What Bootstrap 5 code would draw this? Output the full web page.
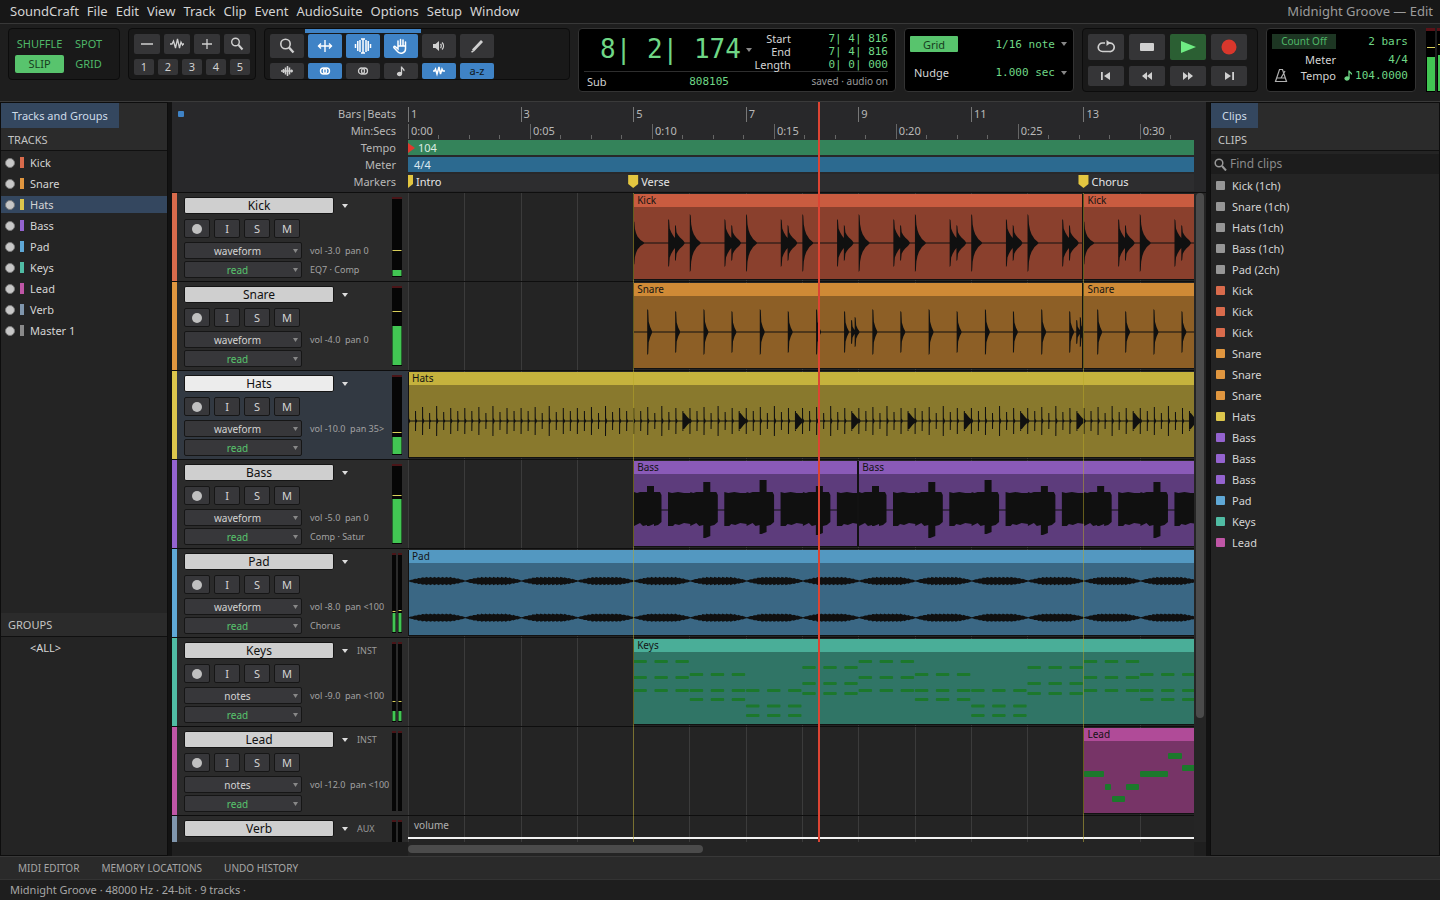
<!DOCTYPE html>
<html lang="en" data-bs-theme="dark">
<head>
<meta charset="utf-8">
<meta name="viewport" content="width=device-width, initial-scale=1">
<title>SoundCraft</title>
<link href="https://cdn.jsdelivr.net/npm/bootstrap@5.3.0/dist/css/bootstrap.min.css" rel="stylesheet">
<style>
:root{--ui:"Noto Sans","Open Sans",sans-serif;--mono:"DejaVu Sans Mono",monospace;--green:#6fd786;--blue:#3f83c6}
body{font:12px/16px var(--ui);background:#1c1c1c;color:#d4d4d4}
button,select,input{font:inherit;color:inherit;border:0;padding:0;margin:0;background:none}
svg{display:block}
a{color:inherit;text-decoration:none}
.menubar{flex:none;height:24px;background:#171717;border-bottom:1px solid #383838;padding:0 7px 1px 10px;gap:8px;font-size:13px}
.menubar span{color:#9b9b9b}
.toolbar{flex:none;height:78px;background:#1e1e1e;border-bottom:1px solid #3a3a3a;padding:4px 0 0 8px;gap:8px;overflow:hidden}
.tool-group{background:#191919;border:1px solid #0c0c0c;border-radius:4px;height:52px;flex:none;overflow:hidden}
.tool-tall{height:64px}
.lcd{background:#000;border:1px solid #333;color:var(--green);height:64px;border-radius:4px;flex:none;font-size:11px;line-height:13px}
.lcd label,.lcd .cap{color:#d4d4d4}
.num{font-family:var(--mono);white-space:pre}
.mode-grid{width:112px;padding:6px;display:grid;grid-template-columns:49px 49px;row-gap:2px;color:#4fb868;font-size:11px}
.mode-grid button{height:18px;line-height:18px}
.mode-grid .on{background:#58c46d;color:#173d1e;border-radius:2px}
.key{background:#353537;border-radius:2px;color:#d0d0d0;display:flex;align-items:center;justify-content:center;flex:none}
.key.on{background:var(--blue);color:#fff}
.zoom-group{width:128px;padding:5px}
.zoom-a .key{height:20px;width:26px}
.zoom-b{margin-top:5px}
.zoom-b .key{height:16px;width:20px;font-size:11px}
.tool-set{width:306px}
.tool-set .key{width:34px;height:24px}
.tool-set .high{padding:1px 5px 0}
.tool-set .low{padding:0 5px;margin-top:5px}
.tool-set .low .key{height:16px;font-size:11px}
.tool-set .az{color:#101820}
.smart{height:4px;width:116px;background:var(--blue);margin-left:40px}
.transport{width:176px;padding:5px}
.transport>div{gap:5px}
.transport .key{width:36px;height:26px}
.transport .low{margin-top:6px}
.transport .low .key{height:20px}
.transport .play{background:#2b5f33}
.tag{background:#58c46d;color:#173d1e;text-align:center;border-radius:1px;width:48px;height:16px}
.count{width:64px;height:15px;background:#1d3623;color:#4fb868;font-size:10px}
.big{font:26px/34px var(--mono);white-space:pre}
.bounds{width:40px;margin-left:-6px}
.sub-line{border-top:1px solid #2e2e2e;padding:3px 0 0 3px}
.saved{color:#9b9b9b;font-size:10px}
.pick{appearance:none;color:var(--green);font-family:var(--mono);text-align:right;padding-right:12px;background:url("data:image/svg+xml,%3Csvg xmlns='http://www.w3.org/2000/svg' width='6' height='4'%3E%3Cpath d='M0 0h6L3 4z' fill='%23888'/%3E%3C/svg%3E") right center no-repeat}
.panel-side{background:#242424;border:1px solid #0d0d0d;overflow:hidden}
.side-left{flex:0 0 168px;width:168px}
.side-right{flex:0 0 230px;width:230px}
.panel-head{background:#2b2b2b}
.panel-head h2,.group-head{font-size:11px;line-height:16px;margin:0;font-weight:400;color:#c4c4c4;border-bottom:1px solid #101010}
.panel-head h2{height:23px;padding:4px 7px}
.group-head{background:#2b2b2b;height:24px;padding:4px 7px}
.group-body{height:218px;padding:3px 29px;font-size:11px}
.tabbtn{background:#34475f;color:#cfdbe8;height:25px;padding:0 11px;font-size:11px}
.list-line{height:21px;padding:0 4px;font-size:11px;display:flex;align-items:center;width:100%;text-align:left}
.list-line i{flex:none}
.track-list{padding-top:1px}
.list-line .led{width:10px;height:10px;border-radius:50%;background:#c8c8c8;border:1px solid #7b7b7b}
.list-line .stripe{width:4px;height:11px;margin:0 6px 0 5px}
.track-list .sel{background:linear-gradient(#34475f,#34475f) 0 2px/100% 17px no-repeat}
.clip-list{padding-top:1px}
.clip-list .list-line{padding:0 5px}
.clip-list .chip{width:9px;height:9px;border-radius:1px;margin-right:7px}
.find{background:#1c1c1c;height:20px;margin-top:3px;padding:0 3px}
.find input{flex:1;min-width:0;margin-left:3px;outline:0}
.find input::placeholder{color:#8a8a8a;opacity:1}
.split{flex:0 0 4px;background:#121212}
.edit-pane{min-width:0;background:#242424}
.ruler-row{flex:none;height:91px;background:#28282a;border-bottom:1px solid #0e0e0e;padding-top:4px}
.ruler-names{flex:0 0 236px;width:236px;margin-top:-1px;padding-right:12px;font-size:11px;line-height:17px;text-align:right;color:#b8b8b8}
.ruler-names i{width:6px;height:6px;border-radius:1px;background:#3f83c6;margin:6px 0 0 6px}
.ruler-lane{flex:1;min-width:0;overflow:hidden}
.ruler-lane div{height:17px;overflow:hidden}
svg text{font-family:var(--ui);font-size:11px}
.gutter{flex:0 0 12px;background:#252525}
.thumb-v{width:8px;height:525px;max-height:100%;background:#4b4b4b;border-radius:4px;margin:0 0 0 2px}
.thumb-h{width:295px;height:8px;background:#4b4b4b;border-radius:4px;margin-top:3px}
.hscroll{flex:none;height:14px}
.hscroll .pad,.hscroll .gutter{background:#1f1f1f}
.hscroll .pad{flex:0 0 236px}
.track-row{height:89px;border-bottom:1px solid #0e0e0e;flex:none}
.strip{flex:0 0 236px;width:236px;background:#2b2b2b;border-left:5px solid var(--c)}
.strip.sel{background:#323942}
.strip-main{flex:1;min-width:0;padding:4px 0 0 7px;white-space:nowrap}
.track-name{width:150px;height:17px;background:#cfcfcf;color:#111;border-radius:2px;border:1px solid #151515;line-height:14px}
.sel .track-name{background:#ececec}
.name-line svg{margin:0 9px 0 8px}
.auto-line{margin-top:2px}
.kind{font-size:9px;color:#9a9a9a}
.sq{width:26px;height:19px;background:#37373a;border:1px solid #161616;border-radius:2px;font-size:11px;line-height:17px}
.sq .led2{display:block;width:10px;height:10px;border-radius:50%;background:#c0c0c0;margin:auto}
.sq-line{margin-top:5px}
.view{appearance:none;width:118px;height:17px;border:1px solid #161616;border-radius:2px;background:#37373a url("data:image/svg+xml,%3Csvg xmlns='http://www.w3.org/2000/svg' width='5' height='4'%3E%3Cpath d='M0 0h5L2.500 4z' fill='%23888'/%3E%3C/svg%3E") right 3px center no-repeat;text-align:center;text-align-last:center;padding-right:11px;font-size:10px;line-height:14px}
.view.auto{color:#58c46d}
.info{font-size:9px;color:#a2a2a2;white-space:pre}
.meter{margin:4px 6px 0 0;flex:none}
.lane{flex:1;min-width:0;position:relative;overflow:hidden;background:#242424}
.clip{position:absolute;top:1px;height:86px;background:var(--b);overflow:hidden;border:solid #121212;border-width:0 1px 1px}
.clip b{display:block;font-weight:400;font-size:10px;line-height:13px;height:13px;padding-left:3px;background:var(--h);color:#141414}
.overlay-lines{position:absolute;top:0;left:236px;right:12px;bottom:14px;overflow:hidden;pointer-events:none}
.tabs-low{flex:none;height:23px;background:#2a2a2a;border-top:1px solid #383838;padding:0 18px;gap:22px;font-size:10px;color:#a6a6a6}
.status{flex:none;height:21px;background:#1e1e1e;border-top:1px solid #333;padding:0 10px;font-size:11px;line-height:20px;color:#a6a6a6}
</style>
</head>
<body class="d-flex flex-column vh-100 overflow-hidden">
<nav class="menubar d-flex align-items-center" aria-label="Main menu">
<a href="#">SoundCraft</a><a href="#">File</a><a href="#">Edit</a><a href="#">View</a><a href="#">Track</a><a href="#">Clip</a><a href="#">Event</a><a href="#">AudioSuite</a><a href="#">Options</a><a href="#">Setup</a><a href="#">Window</a>
<span class="ms-auto">Midnight Groove — Edit</span>
</nav>

<header class="toolbar d-flex">
<div class="tool-group mode-grid"><button>SHUFFLE</button><button>SPOT</button><button class="on">SLIP</button><button>GRID</button></div>

<div class="tool-group zoom-group">
<div class="zoom-a d-flex justify-content-between">
<button class="key" aria-label="Zoom out"><svg width="14" height="14" stroke="currentColor" stroke-width="1.3"><path d="M1 7h12"/></svg></button>
<button class="key" aria-label="Waveform zoom"><svg width="16" height="14" fill="none" stroke="currentColor" stroke-width="1.3"><path d="M1 7h2l1.500-3 2 7 2-9 2 9 1.500-6 1.500 3 .8-1H15"/></svg></button>
<button class="key" aria-label="Zoom in"><svg width="14" height="14" stroke="currentColor" stroke-width="1.3"><path d="M2 7h10M7 2v10"/></svg></button>
<button class="key" aria-label="Zoom tool"><svg width="14" height="14" fill="none" stroke="currentColor" stroke-width="1.400"><circle cx="5.500" cy="5" r="3.800"/><path d="M8.500 8l4 4.500" stroke-width="2"/></svg></button>
</div>
<div class="zoom-b d-flex justify-content-between"><button class="key">1</button><button class="key">2</button><button class="key">3</button><button class="key">4</button><button class="key">5</button></div>
</div>

<div class="tool-group tool-set">
<div class="smart"></div>
<div class="high d-flex gap-1">
<button class="key" aria-label="Zoomer"><svg width="18" height="18" fill="none" stroke="currentColor" stroke-width="1.600"><circle cx="7.500" cy="7" r="4.700"/><path d="M11 10.500l4.500 5" stroke-width="2.400"/></svg></button>
<button class="key on" aria-label="Trim"><svg width="18" height="16" fill="none" stroke="currentColor" stroke-width="1.400"><path d="M2 8h14M9 2v12M5 5.500L2.500 8 5 10.500M13 5.500L15.500 8 13 10.500"/></svg></button>
<button class="key on" aria-label="Selector"><svg width="18" height="18" fill="none" stroke="currentColor" stroke-width="1.500"><path d="M1.500 7v4M3.800 4v10M6 3v12M12 3v12M14.200 4v10M16.500 7v4M7 2h4M7 16h4M9 2v14"/></svg></button>
<button class="key on" aria-label="Grabber"><svg width="18" height="18" fill="none" stroke="currentColor" stroke-width="1.500" stroke-linecap="round"><path d="M6 9V4M8.500 9V2.500M11 9V3M13.500 10V5M6 9v3L3 9.500c-1-.5-1.500.5-1 1.200L6 15c2 2 7.500 1.500 7.500-3V9H6"/></svg></button>
<button class="key" aria-label="Scrubber"><svg width="18" height="16" fill="none" stroke="currentColor" stroke-width="1.300"><path d="M3 6h2.500L9 3v10l-3.500-3H3z" fill="currentColor" stroke="none"/><path d="M10.500 6c1 1 1 3 0 4M12 4.500c2 2 2 5 0 7"/></svg></button>
<button class="key" aria-label="Pencil"><svg width="16" height="16" stroke="currentColor" stroke-width="2.800"><path d="M4 12.500L13 3"/><path d="M2.500 14l2-1" stroke-width="1.500"/></svg></button>
</div>
<div class="low d-flex gap-1">
<button class="key" aria-label="Tab to transients"><svg width="14" height="12" fill="none" stroke="currentColor" stroke-width="1.500"><path d="M1 6h12M3.500 4v4M5.500 2.500v7M7.500 1v10M9.500 2.500v7M11.500 4.500v3"/></svg></button>
<button class="key on" aria-label="Link timeline"><svg width="14" height="10" fill="none" stroke="currentColor" stroke-width="1.400"><circle cx="5.500" cy="5" r="3"/><circle cx="8.500" cy="5" r="3"/></svg></button>
<button class="key" aria-label="Link track"><svg width="14" height="10" fill="none" stroke="currentColor" stroke-width="1.300"><circle cx="5.500" cy="5" r="3"/><circle cx="8.500" cy="5" r="3"/></svg></button>
<button class="key" aria-label="Mirrored MIDI"><svg width="10" height="12" fill="none" stroke="currentColor" stroke-width="1.300"><ellipse cx="3.500" cy="9" rx="2" ry="1.500" fill="currentColor"/><path d="M5.500 9V1.500c0 2 3 2 2.500 4.500"/></svg></button>
<button class="key on" aria-label="Automation follows"><svg width="14" height="12" fill="none" stroke="currentColor" stroke-width="1.500"><path d="M1 6h1.500l1-2 1.500 5 2-7 1.500 7 1.500-5 1 2h2"/></svg></button>
<button class="key on az">a-z</button>
</div>
</div>

<div class="lcd" style="width:318px;padding:3px 7px 0 5px">
<div class="d-flex" style="height:39px">
<span class="big ps-3">8| 2| 174</span>
<svg class="ms-1" width="12" height="36" fill="#888"><path d="M1 16h6l-3 4z"/></svg>
<div class="cap text-end bounds">Start<br>End<br>Length</div>
<div class="num text-end ms-auto">7| 4| 816
7| 4| 816
0| 0| 000</div>
</div>
<div class="d-flex justify-content-between sub-line"><span class="cap">Sub</span><span class="num">808105</span><span class="saved">saved · audio on</span></div>
</div>

<div class="lcd d-flex flex-column" style="width:170px;padding:7px 6px 0 5px">
<div class="d-flex justify-content-between align-items-center"><button class="tag">Grid</button><select class="pick" aria-label="Grid value"><option>1/16 note</option></select></div>
<div class="d-flex justify-content-between align-items-center" style="margin-top:14px"><label for="nudge" class="ps-1">Nudge</label><select class="pick" id="nudge"><option>1.000 sec</option></select></div>
</div>

<div class="tool-group tool-tall transport">
<div class="d-flex">
<button class="key" aria-label="Loop"><svg width="18" height="14" fill="none" stroke="currentColor" stroke-width="1.700"><path d="M8 3H5.500a4 4 0 000 8.500h7a4 4 0 001-8.300l-2-.2"/><path d="M9.500 0l4 3-4 3z" fill="currentColor" stroke="none"/></svg></button>
<button class="key" aria-label="Stop"><svg width="14" height="8" fill="currentColor"><rect width="14" height="8" rx="1"/></svg></button>
<button class="key play" aria-label="Play"><svg width="16" height="14" fill="#6fec83"><path d="M1 1l15 6-15 6z"/></svg></button>
<button class="key" aria-label="Record"><svg width="16" height="16" fill="#d9372c"><circle cx="8" cy="8" r="7.500"/></svg></button>
</div>
<div class="low d-flex">
<button class="key" aria-label="Return to start"><svg width="12" height="10" fill="currentColor"><path d="M1 1h1.800v8H1zM10 1v8L4 5z"/></svg></button>
<button class="key" aria-label="Rewind"><svg width="12" height="8" fill="currentColor"><path d="M6 0v8L1 4zM11 0v8L6 4z"/></svg></button>
<button class="key" aria-label="Fast forward"><svg width="12" height="8" fill="currentColor"><path d="M1 0l5 4-5 4zM6 0l5 4-5 4z"/></svg></button>
<button class="key" aria-label="Go to end"><svg width="12" height="10" fill="currentColor"><path d="M9.200 1H11v8H9.200zM2 1l6 4-6 4z"/></svg></button>
</div>
</div>

<div class="lcd" style="width:150px;padding:5px 7px 0 5px">
<div class="d-flex justify-content-between align-items-center"><button class="count">Count Off</button><span class="num">2 bars</span></div>
<div class="d-flex mt-1"><span class="cap text-end" style="width:64px">Meter</span><span class="num ms-auto">4/4</span></div>
<div class="d-flex align-items-center" style="margin-top:2px;height:14px"><svg width="14" height="15" fill="none" stroke="#b0b0b0" stroke-width="1.200" style="margin-left:2px"><path d="M5.500 1.500h3L12.500 13.500h-11zM3 10h8M7 10l4-7"/></svg><span class="cap text-end" style="width:48px">Tempo</span><svg class="ms-auto" width="11" height="12" fill="none" stroke="#6fd786" stroke-width="1.300"><ellipse cx="3" cy="9.500" rx="2" ry="1.500" fill="#6fd786"/><path d="M5 9.500V1.500c0 2 3 2 2.500 4"/></svg><span class="num">104.0000</span></div>
</div>
<svg class="flex-shrink-0" width="20" height="64" style="margin-left:2px"><path d="M0 0h9v64H0zM11 0h9v64h-9z"/><path d="M0 0h9v3H0zM11 0h9v3h-9z" fill="#5a1218"/><path d="M1 19h8v1H1zM12 16h8v1h-8z" fill="#d9cf5a"/><path d="M1 29h8v34H1zM12 27h8v36h-8z" fill="#42c653"/></svg>
</header>

<main class="d-flex flex-grow-1" style="min-height:0">
<aside class="panel-side side-left d-flex flex-column">
<div class="panel-head"><button class="tabbtn">Tracks and Groups</button><h2>TRACKS</h2></div>
<div class="track-list" id="trackList"></div>
<div class="group-head mt-auto">GROUPS</div>
<div class="group-body">&lt;ALL&gt;</div>
</aside>
<div class="split"></div>
<section class="edit-pane flex-grow-1 d-flex flex-column position-relative">
<div class="ruler-row d-flex">
<div class="ruler-names d-flex"><i></i><div class="ms-auto">Bars|Beats<br>Min:Secs<br>Tempo<br>Meter<br>Markers</div></div>
<div class="ruler-lane" id="rulers"></div><div style="flex:0 0 12px"></div>
</div>
<div class="d-flex flex-grow-1" style="min-height:0"><div class="flex-grow-1 d-flex flex-column overflow-hidden" id="rows" style="min-width:0"></div><div class="gutter"><div class="thumb-v"></div></div></div>
<div class="hscroll d-flex"><div class="pad"></div><div class="flex-grow-1"><div class="thumb-h"></div></div><div class="gutter"></div></div>
<div class="overlay-lines"><svg width="2000" height="100%" id="cursor"></svg></div>
</section>
<div class="split"></div>
<aside class="panel-side side-right">
<div class="panel-head"><button class="tabbtn">Clips</button><h2>CLIPS</h2></div>
<div class="find d-flex align-items-center"><svg width="13" height="13" fill="none" stroke="#999" stroke-width="1.500"><circle cx="5" cy="5" r="3.800"/><path d="M8 8l4 4.500" stroke-width="2"/></svg><input type="search" placeholder="Find clips" aria-label="Find clips"></div>
<div class="clip-list" id="clipList"></div>
</aside>
</main>

<nav class="tabs-low d-flex align-items-center"><a href="#">MIDI EDITOR</a><a href="#">MEMORY LOCATIONS</a><a href="#">UNDO HISTORY</a></nav>
<footer class="status">Midnight Groove · 48000 Hz · 24-bit · 9 tracks ·</footer>

<script src="https://cdn.jsdelivr.net/npm/bootstrap@5.3.0/dist/js/bootstrap.bundle.min.js"></script>
<script>
const BAR = 56.29, SEC = BAR * 104 / 240, LAST = 30;
const px = bar => (bar - 1) * BAR;
const tracks = [
 {n:'Kick', c:'#d96b4c', h:'#c95c40', b:'#8a402d', view:'waveform', info:'vol -3.0  pan 0', fx:'EQ7 · Comp', m:[[6,25]], clips:[[5,13],[13,21]]},
 {n:'Snare', c:'#e0963f', h:'#cf8a36', b:'#8d5f26', view:'waveform', info:'vol -4.0  pan 0', m:[[39,53]], clips:[[5,13],[13,21]]},
 {n:'Hats', c:'#dcc64c', h:'#c5b23d', b:'#89792d', view:'waveform', info:'vol -10.0  pan 35>', m:[[17,21]], clips:[[1,LAST]], sel:true},
 {n:'Bass', c:'#9463cf', h:'#8a5ab8', b:'#5d3c7c', view:'waveform', info:'vol -5.0  pan 0', fx:'Comp · Satur', m:[[44,47]], clips:[[5,9],[9,LAST]]},
 {n:'Pad', c:'#5fa8d6', h:'#5398c1', b:'#3a6784', view:'waveform', info:'vol -8.0  pan <100', fx:'Chorus', m:[[19,20],[19,21]], clips:[[1,LAST]]},
 {n:'Keys', c:'#50bca4', h:'#4aae98', b:'#307566', view:'notes', kind:'INST', info:'vol -9.0  pan <100', m:[[10,19],[10,19]], clips:[[5,LAST]]},
 {n:'Lead', c:'#bf56a6', h:'#b04b98', b:'#773467', view:'notes', kind:'INST', info:'vol -12.0  pan <100', m:[[0,0],[0,0]], clips:[[13,21]]},
 {n:'Verb', c:'#8096ad', view:'volume', kind:'AUX', info:'vol 0.0  pan 0', m:[[0,0],[0,0]], clips:[]}
];

/* one transient: spike at x with the given half height, falling along the shape's points */
function hit(x, a, shape, c = 36) {
  const up = shape.map(([t, k]) => `${x + t},${c - a * k}`), dn = shape.map(([t, k]) => `${x + t},${c + a * k}`).reverse();
  return 'M' + up.concat(dn).join('L') + 'Z';
}
const KICK = [[0,1],[.9,.95],[1.4,.65],[2.5,.45],[4,.3],[7,.14],[11.5,0]];
const KICK_LATE = [[0,1],[.9,.95],[1.5,.6],[3,.45],[5,.3],[8,.15],[10,0]];
const SNARE = [[0,1],[1,.95],[1.5,.45],[3,.22],[5.2,0]];
const TICK = [[0,1],[1,1],[1.1,.2],[2.5,0]];
const OPEN = [[0,1],[2,.85],[5,.45],[9,0]];

function wave(name, from, to) {
  const W = px(to) - px(from);
  let d = '';
  const line = c => `M0,${c - .5}H${W}V${c + .5}H0Z`;
  for (let i = 0; i < to - from; i++) {
    const x = i * BAR, abs = from + i;
    if (name === 'Kick') d += hit(x - .5, i ? 29 : 22, KICK) + hit(x + 34.2, 24, KICK_LATE) + hit(x + 41, 18, KICK_LATE);
    if (name === 'Snare') {
      d += hit(x + 13.2, 23, SNARE) + hit(x + 41.2, 21, SNARE);
      if (abs % 4 === 0) d += hit(x + 48.2, 12, SNARE) + hit(x + 51.8, 15, SNARE);
    }
    if (name === 'Hats') {
      for (let k = 0; k < 8; k++) d += hit(x - 1 + k * BAR / 8, (k % 2 ? 8 : 13) + (k * 5 + i * 3) % 3, TICK);
      if (abs > 4) d += hit(x + 48.2, 9, OPEN);
    }
    if (name === 'Bass') {
      const [u, l] = [[24,16],[28,28],[30,24],[24,25]][(abs - 5) % 4];
      d += `M${x},18l3,1 3,-1H${x+13}V${36-u}H${x+20}V18H${x+26}L${x+27.5},21V48L${x+24},51 ${x+20},52V${36+l-2}L${x+15},${36+l}H${x+13}V51L${x+9},52 ${x+6},49 ${x},52Z`;
      d += `M${x+34},18l4,1 6,-1 6,1H${x+BAR+.3}V50L${x+50},49 ${x+45},51 ${x+41},50 ${x+39},52 ${x+34},52Z`;
    }
    if (name === 'Pad') for (const c of [18, 54.7]) {
      const up = [], dn = [];
      for (let t = 0; t <= BAR; t += 1) {
        const k = Math.min(1, Math.pow(Math.sin(Math.PI * t / BAR), .8) * 1.25), j = ((t * 7 + i * 3) % 4) * .35;
        up.push(`${x + t},${c - .4 - k * (2.7 + j)}`); dn.unshift(`${x + t},${c + .4 + k * (2.7 + j)}`);
      }
      d += 'M' + up.concat(dn).join('L') + 'Z';
    }
  }
  d += name === 'Pad' ? line(18) + line(54.7) : line(36);
  return `<path d="${d}" fill="#101010"/>`;
}
function notes(name, from, to) {
  let s = '';
  if (name === 'Keys') {
    const chords = [[9.5,25.5,38.5],[22.5,38.5,47.5],[38.5,54,63.5],[15.5,31.5,41.5]];
    for (let i = 0; i < to - from; i++) for (const y of chords[i % 4]) for (let k = 0; k < 3; k++)
      s += `<rect x="${i * BAR - .6 + k * 21}" y="${y - 1.5}" width="13.500" height="3" rx="1"/>`;
  } else for (const [x, w, y] of [[0,20,30],[21,6,43],[28,13,55],[42,13,43],[56,28,30],[84,14,12],[98,14,24]])
    s += `<rect x="${x}" y="${y}" width="${w}" height="6" rx="1"/>`;
  return `<g fill="#1c782c">${s}</g>`;
}
function meter(m) {
  const w = m.length > 1 ? 4 : 10;
  return `<svg class="meter" width="10" height="80">` + m.map(([g, p], i) => `<rect x="${i * 6}" width="${w}" height="80" fill="#060606"/><rect x="${i * 6}" width="${w}" height="2" fill="#4a1518"/>` +
    (g ? `<rect x="${i * 6 + .5}" y="${79 - g}" width="${w - 1}" height="${g}" fill="#42c653"/><rect x="${i * 6 + .5}" y="${79 - p - 1}" width="${w - 1}" height="1" fill="#d9cf5a"/>` : '')).join('') + '</svg>';
}
let grid = '';
for (let b = 1; b < LAST; b++) grid += `<rect x="${Math.round(px(b))}" width="1" height="88"/>`;

document.getElementById('rows').innerHTML = tracks.map(t => `
<div class="track-row d-flex">
 <div class="strip d-flex ${t.sel ? 'sel' : ''}" style="--c:${t.c}">
  <div class="strip-main">
   <div class="name-line d-flex align-items-center"><button class="track-name">${t.n}</button><svg width="6" height="4" fill="#ddd"><path d="M0 0h6L3 4z"/></svg><span class="kind">${t.kind || ''}</span></div>
   <div class="sq-line d-flex gap-1"><button class="sq" aria-label="Record enable"><span class="led2"></span></button><button class="sq">I</button><button class="sq">S</button><button class="sq">M</button></div>
   <div class="d-flex align-items-center gap-2 mt-1"><select class="view" aria-label="${t.n} view"><option>${t.view}</option></select><span class="info">${t.info.replace('<', '&lt;')}</span></div>
   <div class="auto-line d-flex align-items-center gap-2"><select class="view auto" aria-label="${t.n} automation"><option>read</option></select><span class="info">${t.fx || ''}</span></div>
  </div>${meter(t.m)}
 </div>
 <div class="lane"><svg width="2000" height="88" fill="#3b3b3b">${grid}${t.n === 'Verb' ? '<text x="6" y="13" style="font-size:10px" fill="#b0b0b0">volume</text><rect y="21" width="2000" height="2" fill="#f2f2f2"/>' : ''}</svg>
 ${t.clips.map(([a, z]) => `<div class="clip" style="left:${px(a)}px;width:${px(z) - px(a)}px;--h:${t.h};--b:${t.b}"><b>${t.n}</b><svg width="${px(z) - px(a)}" height="72">${t.view === 'notes' ? notes(t.n, a, z) : wave(t.n, a, z)}</svg></div>`).join('')}</div>
</div>`).join('');

const flag = (b, n) => `<path d="M${px(b) - 5} 1h10v9l-5 4-5-4z" fill="#e3c640"/><text x="${px(b) + 8}" y="12" fill="#e6e6e6">${n}</text>`;
function drawRulers() {
  const lane = document.getElementById('rulers'), w = lane.clientWidth;
  let bars = '', secs = '';
  for (let b = 1; px(b) < w - 20; b += 2) bars += `<rect x="${Math.round(px(b))}" y="1" width="1" height="15" fill="#777"/><text x="${px(b) + 3}" y="12" fill="#b8b8b8">${b}</text>`;
  for (let i = 0; i * 1.25 * SEC < w - 20; i++) {
    const x = i * 1.25 * SEC, major = i % 4 === 0, s = i / 4 * 5;
    secs += `<rect x="${Math.round(x)}" y="${major ? 1 : 12}" width="1" height="${major ? 15 : 4}" fill="#666"/>` +
      (major ? `<text x="${x + 3}" y="12" fill="#b8b8b8">${Math.floor(s / 60)}:${String(s % 60).padStart(2, '0')}</text>` : '');
  }
  lane.innerHTML = [bars, secs,
   '<rect width="100%" height="15" fill="#34835a"/><path d="M0 3l7 5-7 5z" fill="#e0392e"/><text x="10" y="12" fill="#dcebe2">104</text>',
   '<rect width="100%" height="15" fill="#2c6a90"/><text x="6" y="12" fill="#dce8f0">4/4</text>',
   '<rect width="100%" height="17" fill="#2d2d2f"/>' + flag(1, 'Intro') + flag(5, 'Verse') + flag(13, 'Chorus')
  ].map(s => `<div><svg width="100%" height="17">${s}</svg></div>`).join('');
}
drawRulers();
addEventListener('resize', drawRulers);
document.getElementById('cursor').innerHTML = [5, 13].map(b => `<rect x="${Math.round(px(b))}" y="91" width="1" height="100%" fill="#b8a828" opacity=".5"/>`).join('') + '<rect x="410" width="2" height="100%" fill="#dd4433"/>';

document.getElementById('trackList').innerHTML = tracks.concat({n:'Master 1', c:'#8a8a8a'}).map(t => `<button class="list-line ${t.sel ? 'sel' : ''}"><i class="led"></i><i class="stripe" style="background:${t.c}"></i>${t.n}</button>`).join('');
const colour = n => tracks.find(t => t.n === n).c;
document.getElementById('clipList').innerHTML = ['Kick (1ch)','Snare (1ch)','Hats (1ch)','Bass (1ch)','Pad (2ch)'].map(n => [n, '#969696'])
 .concat(['Kick','Kick','Kick','Snare','Snare','Snare','Hats','Bass','Bass','Bass','Pad','Keys','Lead'].map(n => [n, colour(n)]))
 .map(([n, c]) => `<button class="list-line"><i class="chip" style="background:${c}"></i>${n}</button>`).join('');
</script>
</body>
</html>
